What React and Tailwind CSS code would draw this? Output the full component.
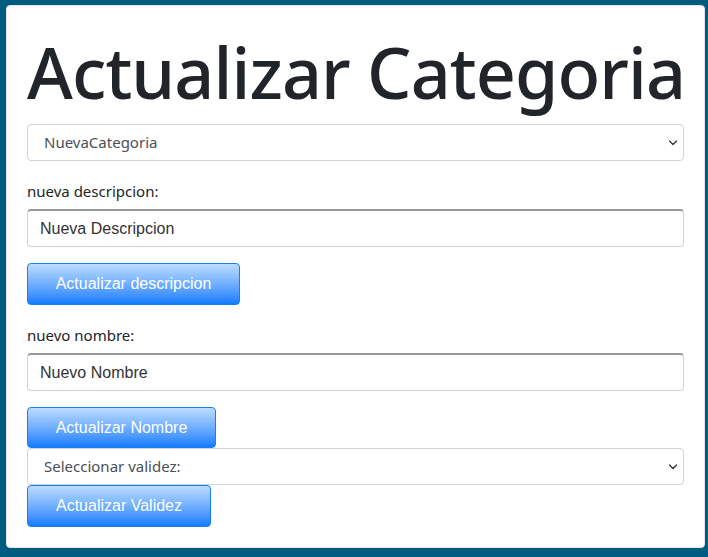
import React from "react";

function Chevron() {
  return (
    <svg width="10" height="7" viewBox="0 0 10 7" className="absolute right-[5px] top-1/2 -translate-y-1/2">
      <path d="M1.5 1.5 L5 5 L8.5 1.5" fill="none" stroke="#343a40" strokeWidth="1.4" strokeLinecap="round" strokeLinejoin="round" />
    </svg>
  );
}

function Select({ text }) {
  return (
    <div className="relative h-[37px] w-full rounded-[4px] border border-[#ced4da] bg-white flex items-center pl-[16px] text-[15px] text-[#495057]" style={{ fontFamily: '"Noto Sans", sans-serif' }}>
      {text}
      <Chevron />
    </div>
  );
}

function Input({ text }) {
  return (
    <div className="h-[38px] w-full rounded-[4px] border border-[#ced4da] border-t-2 border-t-[#9a9a9a] bg-white flex items-center pl-[12px] text-[16px] text-[#333]" style={{ fontFamily: '"Liberation Sans", Arial, sans-serif' }}>
      {text}
    </div>
  );
}

function Button({ text, w, h }) {
  return (
    <div className={`${h} ${w} rounded-[4px] border border-[#1a7ff0] bg-gradient-to-b from-[#bcdcff] to-[#0a7cff] flex items-center justify-center text-[16px] text-white`} style={{ fontFamily: '"Liberation Sans", Arial, sans-serif' }}>
      {text}
    </div>
  );
}

export default function App() {
  return (
    <div className="h-[557px] w-[708px] bg-[#005b80] pt-[5px] pl-[6px] pr-[3px] pb-[9px]">
      <div className="h-full w-full rounded-[4px] bg-white border border-[#e3e7ea] px-[20px] flex flex-col">
        <h1 className="text-[70px] leading-[86px] mt-[23px] text-[#212529] font-medium tracking-[-0.9px] whitespace-nowrap" style={{ fontFamily: '"Noto Sans", sans-serif' }}>
          Actualizar Categoria
        </h1>
        <div className="mt-[9px]">
          <Select text="NuevaCategoria" />
        </div>
        <div className="mt-[18px] h-[24px] leading-[24px] text-[15px] text-[#212529]" style={{ fontFamily: '"Noto Sans", sans-serif' }}>
          nueva descripcion:
        </div>
        <div className="mt-[6px]">
          <Input text="Nueva Descripcion" />
        </div>
        <div className="mt-[16px]">
          <Button text="Actualizar descripcion" w="w-[213px]" h="h-[42px]" />
        </div>
        <div className="mt-[18px] h-[24px] leading-[24px] text-[15px] text-[#212529]" style={{ fontFamily: '"Noto Sans", sans-serif' }}>
          nuevo nombre:
        </div>
        <div className="mt-[6px]">
          <Input text="Nuevo Nombre" />
        </div>
        <div className="mt-[16px]">
          <Button text="Actualizar Nombre" w="w-[189px]" h="h-[41px]" />
        </div>
        <div>
          <Select text="Seleccionar validez:" />
        </div>
        <div>
          <Button text="Actualizar Validez" w="w-[184px]" h="h-[42px]" />
        </div>
      </div>
    </div>
  );
}
